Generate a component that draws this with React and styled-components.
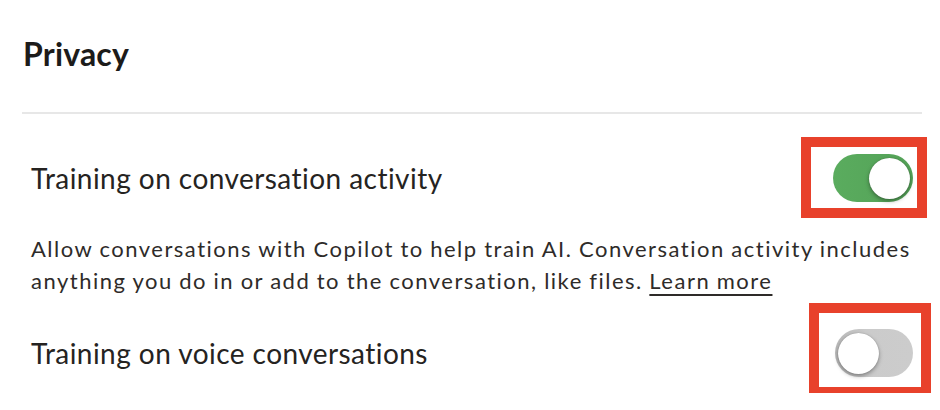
import React from "react";
import styled, { createGlobalStyle } from "styled-components";

const Global = createGlobalStyle`
  html, body { margin: 0; padding: 0; background: #ffffff; }
  body { font-family: Lato, "Open Sans", sans-serif; -webkit-font-smoothing: antialiased; }
`;

const Page = styled.div`
  width: 900px;
  padding: 34px 0 0 22px;
  display: flex;
  flex-direction: column;
`;

const Heading = styled.h2`
  margin: 0;
  padding-left: 1px;
  font-size: 32px;
  line-height: 40px;
  font-weight: 700;
  color: #1c1b1a;
  letter-spacing: 0.2px;
`;

const Divider = styled.hr`
  margin: 38px 0 0;
  border: 0;
  height: 2px;
  background: #e7e7e7;
`;

const Section = styled.div`
  display: flex;
  flex-direction: column;
  padding: 0 9px 0 9px;
`;

const Row = styled.div`
  display: flex;
  align-items: center;
  justify-content: space-between;
  height: 80px;
  margin-top: ${(p) => p.$mt}px;
`;

const Label = styled.span`
  font-size: 28px;
  color: #252321;
  letter-spacing: 0.45px;
`;

const Description = styled.p`
  margin: 15px 0 0;
  font-size: 22px;
  line-height: 32px;
  color: #2e2b29;
  letter-spacing: 1.5px;
  word-spacing: -0.6px;
`;

const Link = styled.a`
  color: #2e2b29;
  text-decoration: underline;
  text-underline-offset: 5px;
  text-decoration-thickness: 2px;
`;

const ToggleWrap = styled.div`
  position: relative;
  flex: none;
`;

const Track = styled.div`
  width: ${(p) => p.$w}px;
  height: 48px;
  border-radius: 24px;
  background: ${(p) =>
    p.$on
      ? "linear-gradient(90deg, #5aac5e, #54a258)"
      : "linear-gradient(90deg, #b9b9b9, #cbcbcb 40%, #cccccc)"};
  display: flex;
  align-items: center;
  justify-content: ${(p) => (p.$on ? "flex-end" : "flex-start")};
  padding: 0 3px;
  box-sizing: border-box;
`;

const Knob = styled.div`
  width: 41px;
  height: 41px;
  border-radius: 50%;
  background: #ffffff;
  box-shadow: 0 2px 4px rgba(0, 0, 0, 0.35), 0 0 1px rgba(0, 0, 0, 0.3);
`;

const Highlight = styled.div`
  position: absolute;
  top: ${(p) => p.$t}px;
  right: ${(p) => p.$r}px;
  bottom: ${(p) => p.$b}px;
  left: ${(p) => p.$l}px;
  border: 10px solid #e8412b;
  pointer-events: none;
`;

function Toggle({ on, width, frame }) {
  return (
    <ToggleWrap>
      <Track $on={on} $w={width}>
        <Knob />
      </Track>
      <Highlight $t={frame[0]} $r={frame[1]} $b={frame[2]} $l={frame[3]} />
    </ToggleWrap>
  );
}

export default function App() {
  return (
    <>
      <Global />
      <Page>
        <Heading>Privacy</Heading>
        <Divider />
        <Section>
          <Row $mt={24}>
            <Label>Training on conversation activity</Label>
            <Toggle on width={80} frame={[-17, -14, -16, -32]} />
          </Row>
          <Description>
            Allow conversations with Copilot to help train AI. Conversation activity includes
            anything you do in or add to the conversation, like files.{" "}
            <Link href="#">Learn more</Link>
          </Description>
          <Row $mt={16}>
            <Label>Training on voice conversations</Label>
            <Toggle on={false} width={78} frame={[-26, -18, -20, -26]} />
          </Row>
        </Section>
      </Page>
    </>
  );
}
